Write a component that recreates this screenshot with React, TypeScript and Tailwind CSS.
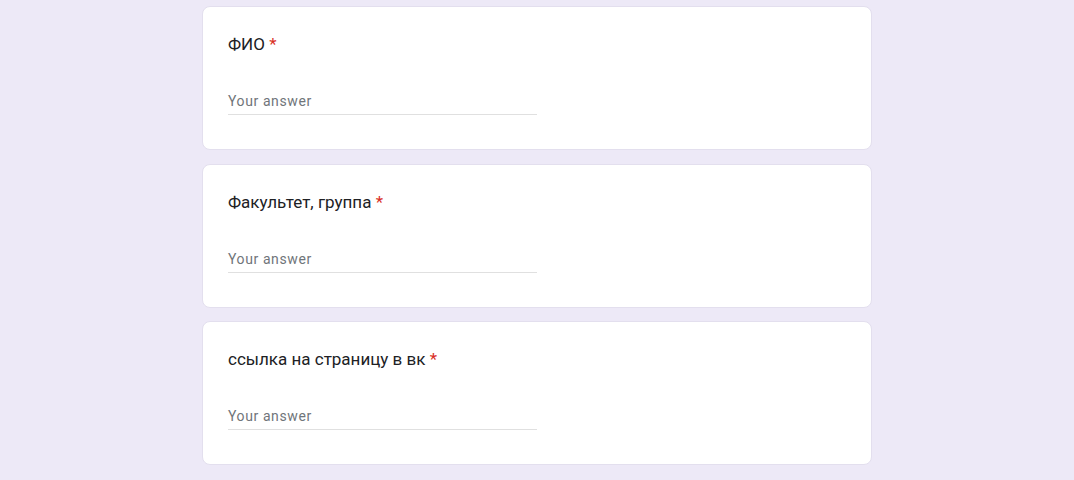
import React from 'react';

const questions = ['ФИО', 'Факультет, группа', 'ссылка на страницу в вк'];

export default function App() {
    return (
        <div className="min-h-[480px] w-full bg-[#ede9f7] flex flex-col items-center pt-[6px] gap-[13.5px]" style={{ fontFamily: 'Roboto, "Noto Sans", sans-serif' }}>
            {questions.map((q) => (
                <div key={q} className="w-[670px] h-[144px] bg-white rounded-lg border border-[#e3dfee] px-[25px] pt-[25px]">
                    <div className="text-[17px] leading-6 text-[#202124]">
                        {q} <span className="text-[#d93025]">*</span>
                    </div>
                    <div className="mt-[35px] w-[309px] h-[24px] border-b border-[#e0e0e0] text-[14px] leading-5 text-[#70757a] tracking-[0.6px]">
                        Your answer
                    </div>
                </div>
            ))}
        </div>
    );
}
